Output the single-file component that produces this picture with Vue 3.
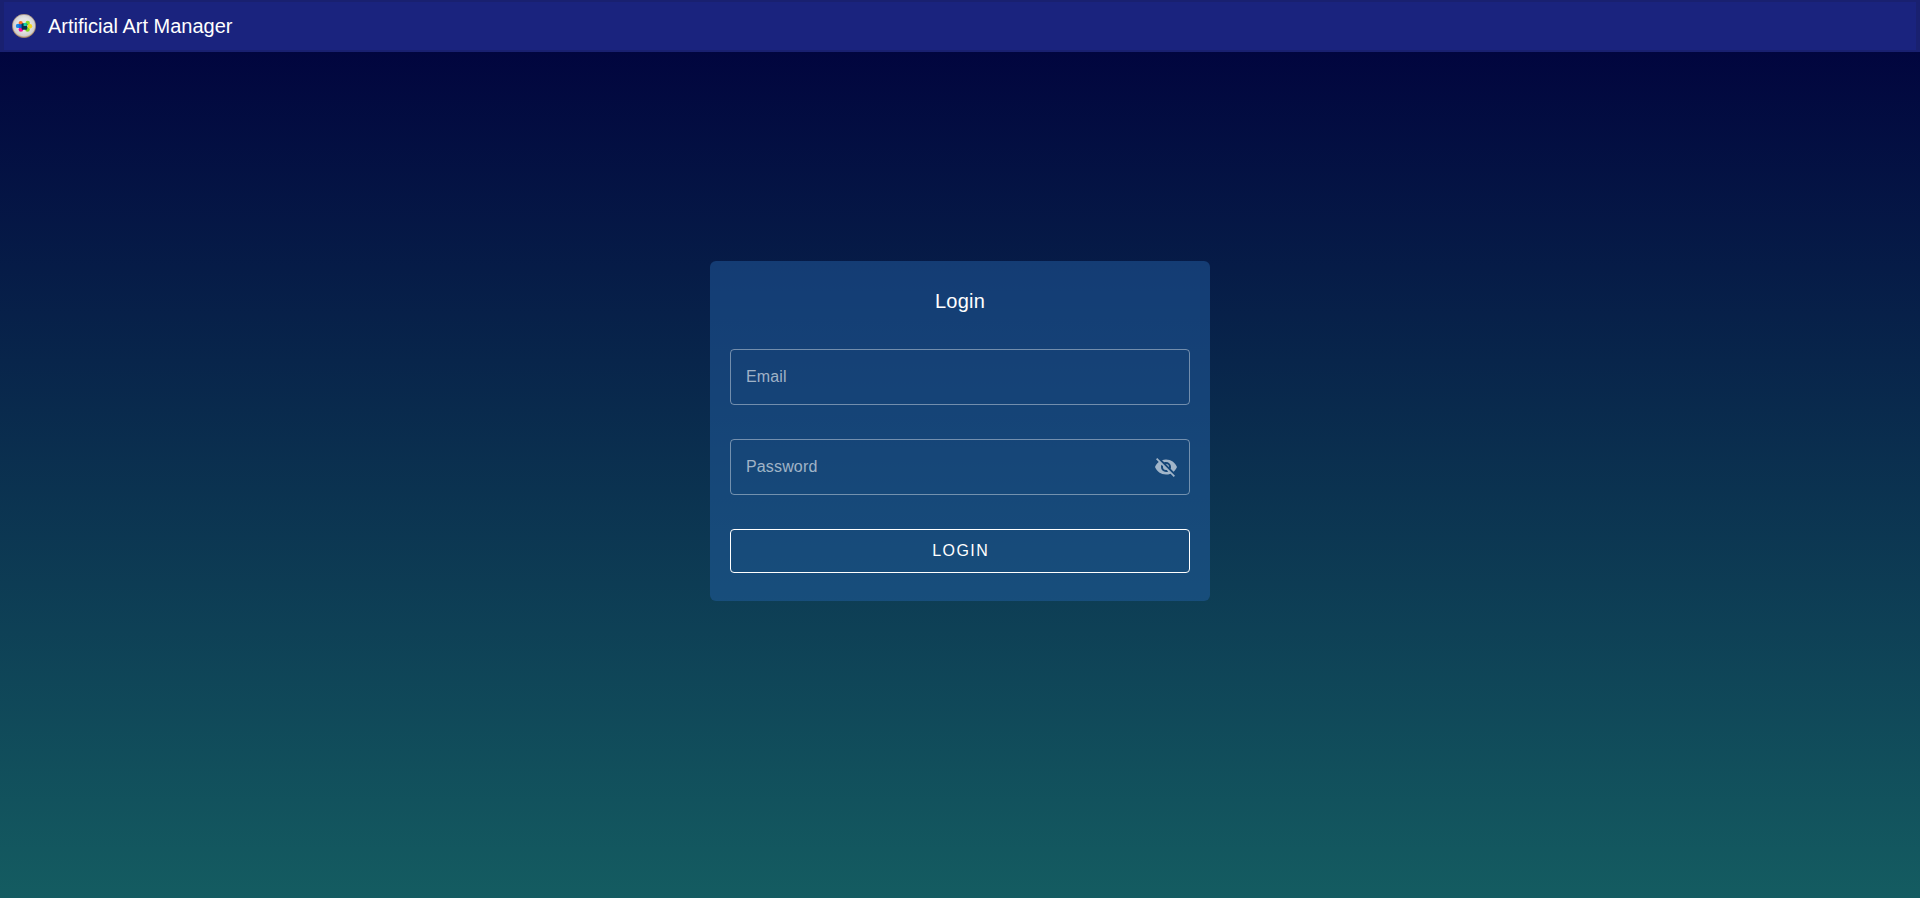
<script setup>
import { ref } from 'vue'

const email = ref('')
const password = ref('')
const visible = ref(false)
</script>

<template>
  <div class="page">
    <header class="bar">
      <svg class="logo" viewBox="0 0 24 24">
        <defs>
          <radialGradient id="disc" cx="50%" cy="45%" r="55%">
            <stop offset="0.5" stop-color="#e4e4e4" />
            <stop offset="0.85" stop-color="#cfcfcf" />
            <stop offset="1" stop-color="#b8935f" />
          </radialGradient>
        </defs>
        <circle cx="12" cy="12" r="11.7" fill="url(#disc)" stroke="#a98567" stroke-width="0.6" />
        <circle cx="8.7" cy="9" r="2.1" fill="#ff6a1c" />
        <circle cx="15.7" cy="9" r="2.2" fill="#8fdc28" />
        <circle cx="8.9" cy="15.4" r="2.3" fill="#f5109a" />
        <circle cx="15.5" cy="15.4" r="2.3" fill="#7fd820" />
        <circle cx="6" cy="11.9" r="2.2" fill="#1688e8" />
        <circle cx="18" cy="12.2" r="2.2" fill="#f6d71b" />
        <rect x="6.8" y="10.2" width="4" height="3.8" fill="#1263d8" />
        <rect x="9.6" y="9.2" width="5.6" height="6.6" rx="1" fill="#06304c" />
        <rect x="11.6" y="9" width="3.2" height="3" fill="#18cfa0" />
      </svg>
      <h1 class="brand">Artificial Art Manager</h1>
    </header>

    <main class="main">
      <form class="card" @submit.prevent>
        <h2 class="title">Login</h2>
        <label class="field">
          <input v-model="email" type="email" placeholder="Email" />
        </label>
        <div class="field">
          <input v-model="password" :type="visible ? 'text' : 'password'" placeholder="Password" />
          <svg class="eye" viewBox="0 0 24 24" @click="visible = !visible">
            <path d="M11.83,9L15,12.16C15,12.11 15,12.05 15,12A3,3 0 0,0 12,9C11.94,9 11.89,9 11.83,9M7.53,9.8L9.08,11.35C9.03,11.56 9,11.77 9,12A3,3 0 0,0 12,15C12.22,15 12.44,14.97 12.65,14.92L14.2,16.47C13.53,16.8 12.79,17 12,17A5,5 0 0,1 7,12C7,11.21 7.2,10.47 7.53,9.8M2,4.27L4.28,6.55L4.73,7C3.08,8.3 1.78,10 1,12C2.73,16.39 7,19.5 12,19.5C13.55,19.5 15.03,19.2 16.38,18.66L16.81,19.08L19.73,22L21,20.73L3.27,3M12,7A5,5 0 0,1 17,12C17,12.64 16.87,13.26 16.64,13.82L19.57,16.75C21.07,15.5 22.27,13.86 23,12C21.27,7.61 17,4.5 12,4.5C10.6,4.5 9.26,4.75 8,5.2L10.17,7.35C10.74,7.13 11.35,7 12,7Z" />
          </svg>
        </div>
        <button class="submit" type="submit">LOGIN</button>
      </form>
    </main>
  </div>
</template>

<style>
body {
  margin: 0;
}
</style>

<style scoped>
.page {
  box-sizing: border-box;
  display: flex;
  flex-direction: column;
  height: 100vh;
  font-family: "Liberation Sans", Arial, sans-serif;
  color: #fff;
  background: linear-gradient(to bottom, #00003c 0, #145c61 100%);
}

.bar {
  box-sizing: border-box;
  display: flex;
  flex: none;
  align-items: center;
  gap: 12px;
  height: 52px;
  padding: 0 8px;
  background: #1a237e;
  border: solid #192070;
  border-width: 2px 4px;
}

.logo {
  width: 24px;
  height: 24px;
}

.brand {
  margin: 0;
  font-size: 20px;
  font-weight: 400;
  line-height: 32px;
}

.main {
  display: flex;
  flex: 1;
  align-items: center;
  justify-content: center;
  padding-bottom: 88px;
}

.card {
  box-sizing: border-box;
  display: flex;
  flex-direction: column;
  width: 500px;
  height: 340px;
  padding: 24px 20px 28px;
  border-radius: 6px;
  background: rgba(33, 93, 162, 0.5);
}

.title {
  margin: 0 0 32px;
  font-size: 20px;
  font-weight: 400;
  line-height: 32px;
  text-align: center;
  letter-spacing: 0.25px;
}

.field {
  box-sizing: border-box;
  display: flex;
  align-items: center;
  height: 56px;
  margin-bottom: 34px;
  padding: 0 11px 0 15px;
  border: 1px solid rgba(255, 255, 255, 0.4);
  border-radius: 4px;
}

.field input {
  flex: 1;
  min-width: 0;
  padding: 0;
  border: 0;
  outline: 0;
  background: transparent;
  color: #fff;
  font: 16px/24px "Liberation Sans", Arial, sans-serif;
  letter-spacing: 0.15px;
}

.field input::placeholder {
  color: rgba(255, 255, 255, 0.6);
  opacity: 1;
}

.eye {
  width: 24px;
  height: 24px;
  fill: rgba(255, 255, 255, 0.6);
  cursor: pointer;
}

.submit {
  height: 44px;
  padding: 0;
  border: 1px solid #fff;
  border-radius: 4px;
  background: transparent;
  color: #fff;
  font: 16px/24px "Liberation Sans", Arial, sans-serif;
  letter-spacing: 1.42px;
  text-indent: 1.5px;
}
</style>
